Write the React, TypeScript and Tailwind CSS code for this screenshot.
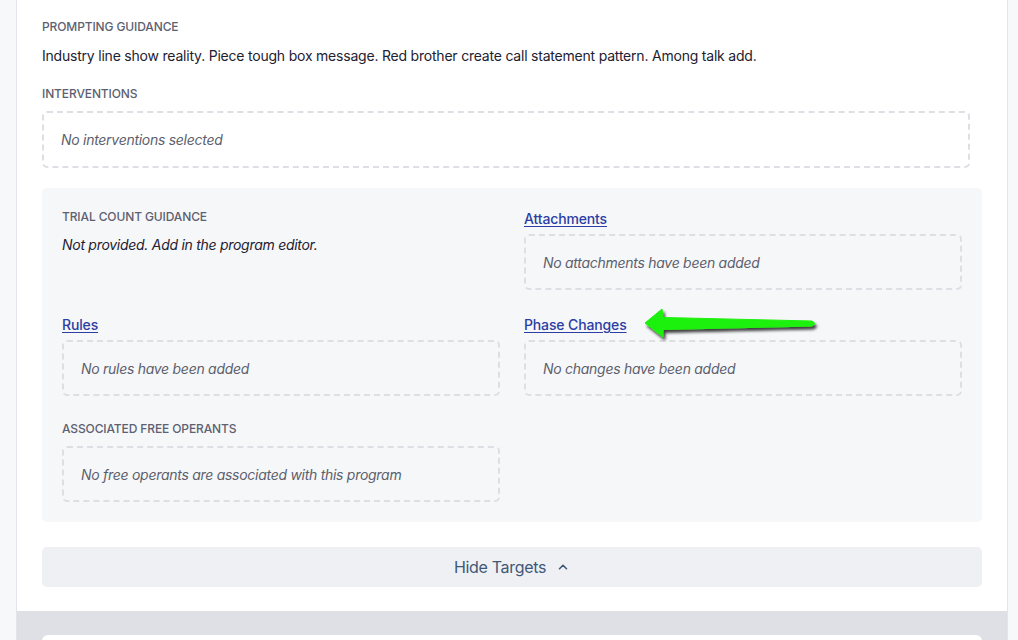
import React from "react";
import { ChevronUp } from "lucide-react";

const font = { fontFamily: "Inter, 'Noto Sans', sans-serif" };

function Label({ children }: { children: React.ReactNode }) {
  return (
    <div className="text-[12px] leading-4 font-medium uppercase text-[#5d6070] tracking-[-0.01em]">
      {children}
    </div>
  );
}

function Empty({ children }: { children: React.ReactNode }) {
  return (
    <div className="h-[56px] flex items-center px-[17px] border-2 border-dashed border-[#dddfe4] rounded-[5px] text-[14px] italic text-[#5c5f6d] tracking-[-0.02em]">
      {children}
    </div>
  );
}

function LinkTitle({ children }: { children: React.ReactNode }) {
  return (
    <div className="h-5 leading-5 text-[14px] font-medium text-[#2c3ea3] underline underline-offset-2 mb-[5px] tracking-[-0.01em]">
      {children}
    </div>
  );
}

export default function App() {
  return (
    <div className="relative h-[640px] overflow-hidden bg-[#f7f8fa] flex" style={font}>
      <div className="ml-4 w-[992px] border-x border-[#e3e4e9] bg-[#dfe0e5] flex flex-col">
        <div className="bg-white px-[25px] pt-[19px] pb-6">
          <Label>Prompting Guidance</Label>
          <p className="mt-[11px] text-[14px] leading-5 text-[#1d2131] tracking-[-0.015em]">
            Industry line show reality. Piece tough box message. Red brother create call statement pattern. Among talk add.
          </p>
          <div className="mt-5">
            <Label>Interventions</Label>
          </div>
          <div className="mt-[9px] mr-3">
            <div className="h-[57px] flex items-center px-[17px] border-2 border-dashed border-[#dddfe4] rounded-[5px] text-[14px] italic text-[#5c5f6d] tracking-[-0.02em]">
              No interventions selected
            </div>
          </div>
          <div className="mt-[20px] bg-[#f6f7f9] rounded-[5px] px-5 pt-[21px] pb-5 grid grid-cols-2 gap-x-6 gap-y-[25px]">
            <div>
              <Label>Trial Count Guidance</Label>
              <p className="mt-2.5 text-[14px] leading-5 italic text-[#1d2131] tracking-[-0.02em]">
                Not provided. Add in the program editor.
              </p>
            </div>
            <div>
              <LinkTitle>Attachments</LinkTitle>
              <Empty>No attachments have been added</Empty>
            </div>
            <div>
              <LinkTitle>Rules</LinkTitle>
              <Empty>No rules have been added</Empty>
            </div>
            <div>
              <LinkTitle>Phase Changes</LinkTitle>
              <Empty>No changes have been added</Empty>
            </div>
            <div>
              <Label>Associated Free Operants</Label>
              <div className="mt-[9px]">
                <Empty>No free operants are associated with this program</Empty>
              </div>
            </div>
          </div>
          <button className="mt-[25px] w-full h-10 bg-[#eff0f4] rounded-[5px] flex items-center justify-center gap-2.5 text-[16px] text-[#3f5878] tracking-[-0.02em]">
            <span>Hide Targets</span>
            <ChevronUp size={14} strokeWidth={2.75} />
          </button>
        </div>
        <div className="px-[25px] pt-6">
          <div className="h-20 bg-white rounded-[6px]" />
        </div>
      </div>
      <div className="flex-1" />
      <svg
        className="absolute left-[636px] top-[302px]"
        width="190"
        height="46"
        viewBox="636 302 190 46"
      >
        <defs>
          <filter id="sh" x="-20%" y="-50%" width="140%" height="200%">
            <feGaussianBlur in="SourceAlpha" stdDeviation="1.6" />
            <feOffset dx="2" dy="3" result="b" />
            <feComponentTransfer>
              <feFuncA type="linear" slope="0.75" />
            </feComponentTransfer>
            <feMerge>
              <feMergeNode />
              <feMergeNode in="SourceGraphic" />
            </feMerge>
          </filter>
        </defs>
        <polygon
          filter="url(#sh)"
          fill="#1cf00a"
          stroke="#1cf00a"
          strokeWidth="1"
          strokeLinejoin="round"
          points="645,323 662,309 663,317.5 812,321 815,323.5 812,326 663,329.5 663,337"
        />
      </svg>
    </div>
  );
}
